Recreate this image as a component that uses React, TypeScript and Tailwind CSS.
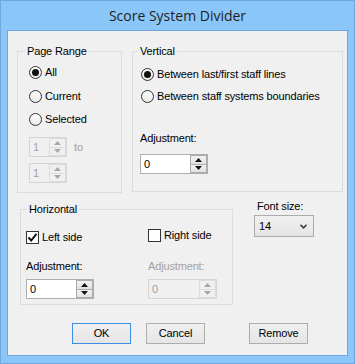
import React from "react";

function Radio({ checked, label, className }: { checked?: boolean; label: string; className: string }) {
  return (
    <div className={`flex items-center ${className}`}>
      <span className="w-[13px] h-[13px] rounded-full border border-[#333333] bg-gradient-to-b from-[#ffffff] to-[#e9e9e9] flex items-center justify-center shrink-0">
        {checked ? <span className="w-[7px] h-[7px] rounded-full bg-[#111111]" /> : null}
      </span>
      <span className="ml-[3px] leading-[13px]">{label}</span>
    </div>
  );
}

function Check({ checked, label, className }: { checked?: boolean; label: string; className: string }) {
  return (
    <div className={`flex items-center ${className}`}>
      <span className="w-[13px] h-[13px] border border-[#333333] bg-white flex items-center justify-center shrink-0">
        {checked ? (
          <svg width="11" height="11" viewBox="0 0 11 11">
            <path d="M1.5 5.5 L4.2 8.5 L9.5 1.8" fill="none" stroke="#111" strokeWidth="2" />
          </svg>
        ) : null}
      </span>
      <span className="ml-[3px] leading-[13px]">{label}</span>
    </div>
  );
}

function Arrow({ up, color }: { up?: boolean; color: string }) {
  return (
    <svg width="7" height="4" viewBox="0 0 7 4">
      {up ? <polygon points="0,4 7,4 3.5,0" fill={color} /> : <polygon points="0,0 7,0 3.5,4" fill={color} />}
    </svg>
  );
}

function Spin({ value, disabled, className }: { value: string; disabled?: boolean; className: string }) {
  return (
    <div
      className={`flex h-[20px] border ${
        disabled ? "border-[#d5d5d5] bg-[#f0f0f0] text-[#a0a0a0]" : "border-[#abadb3] bg-white text-black"
      } ${className}`}
    >
      <div className="flex-1 flex items-center pl-[3px] leading-[13px]">{value}</div>
      <div className="w-[17px] flex flex-col">
        <div
          className={`flex-1 flex items-center justify-center border ${
            disabled ? "border-[#dcdcdc] bg-[#f0f0f0]" : "border-[#acacac] bg-gradient-to-b from-[#f2f2f2] to-[#e2e2e2]"
          }`}
        >
          <Arrow up color={disabled ? "#a8a8a8" : "#111"} />
        </div>
        <div
          className={`flex-1 flex items-center justify-center border-x border-b ${
            disabled ? "border-[#dcdcdc] bg-[#f0f0f0]" : "border-[#acacac] bg-gradient-to-b from-[#f2f2f2] to-[#e2e2e2]"
          }`}
        >
          <Arrow color={disabled ? "#a8a8a8" : "#111"} />
        </div>
      </div>
    </div>
  );
}

function Btn({ label, def, className }: { label: string; def?: boolean; className: string }) {
  return (
    <div
      className={`w-[59px] h-[21px] flex items-center justify-center border bg-gradient-to-b from-[#f0f0f0] to-[#e5e5e5] leading-[13px] ${
        def ? "border-[#3d8fe3]" : "border-[#adadad]"
      } ${className}`}
    >
      {label}
    </div>
  );
}

export default function App() {
  return (
    <div className="w-[355px] h-[364px] bg-[#8ac6f8] border border-[#72a8de] flex flex-col font-['Liberation_Sans',Arial,sans-serif] text-[11px] tracking-[-0.15px] text-black">
      <div className="h-[29px] flex items-center justify-center font-['Open_Sans',sans-serif] text-[14px] tracking-normal text-[#1f1f1f]">
        Score System Divider
      </div>
      <div className="mx-[6px] h-[326px] border border-[#6fa5dc] bg-[#f0f0f0] flex flex-col">
        {/* Row 1 */}
        <div className="flex mt-[14px]">
          <fieldset className="ml-[9px] w-[105px] h-[148px] border border-[#dcdcdc]">
            <legend className="ml-[7px] px-[2px] leading-[13px]">Page Range</legend>
            <div className="pl-[11px] pt-[2px] flex flex-col">
              <Radio checked label="All" className="h-[24px]" />
              <Radio label="Current" className="h-[24px]" />
              <Radio label="Selected" className="h-[22px]" />
              <div className="flex items-center mt-[7px]">
                <Spin value="1" disabled className="w-[38px]" />
                <span className="ml-[7px] text-[#a0a0a0] leading-[13px]">to</span>
              </div>
              <Spin value="1" disabled className="w-[38px] mt-[6px]" />
            </div>
          </fieldset>
          <fieldset className="ml-[10px] w-[211px] h-[147px] border border-[#dcdcdc]">
            <legend className="ml-[5px] px-[2px] leading-[13px]">Vertical</legend>
            <div className="pl-[7px] pt-[5px] flex flex-col">
              <Radio checked label="Between last/first staff lines" className="h-[22px] ml-[1px]" />
              <Radio label="Between staff systems boundaries" className="h-[22px] ml-[1px]" />
              <div className="mt-[25px] leading-[13px]">Adjustment:</div>
              <Spin value="0" className="w-[68px] mt-[9px]" />
            </div>
          </fieldset>
        </div>
        {/* Row 2 */}
        <div className="flex items-start mt-[6px]">
          <fieldset className="mt-[4px] ml-[12px] w-[213px] h-[102px] border border-[#dcdcdc]">
            <legend className="ml-[6px] px-[2px] leading-[13px]">Horizontal</legend>
            <div className="flex pl-[5px]">
              <div className="w-[122px] flex flex-col">
                <Check checked label="Left side" className="h-[16px] mt-[13px]" />
                <div className="mt-[15px] leading-[13px]">Adjustment:</div>
                <Spin value="0" className="w-[68px] mt-[6px]" />
              </div>
              <div className="flex flex-col">
                <Check label="Right side" className="h-[16px] mt-[11px]" />
                <div className="mt-[17px] leading-[13px] text-[#a0a0a0]">Adjustment:</div>
                <Spin value="0" disabled className="w-[69px] mt-[6px]" />
              </div>
            </div>
          </fieldset>
          <div className="ml-[21px] flex flex-col">
            <div className="mt-[1px] pl-[3px] leading-[13px]">Font size:</div>
            <div className="mt-[2px] w-[60px] h-[22px] border border-[#acacac] bg-gradient-to-b from-[#f0f0f0] to-[#e5e5e5] flex items-center pl-[4px] pr-[6px]">
              <span className="flex-1 leading-[13px]">14</span>
              <svg width="7" height="5" viewBox="0 0 7 5">
                <path d="M0.5 0.8 L3.5 3.8 L6.5 0.8" fill="none" stroke="#444" strokeWidth="1.6" />
              </svg>
            </div>
          </div>
        </div>
        {/* Buttons */}
        <div className="flex mt-[18px]">
          <Btn def label="OK" className="ml-[64px]" />
          <Btn label="Cancel" className="ml-[15px]" />
          <Btn label="Remove" className="ml-[44px]" />
        </div>
      </div>
    </div>
  );
}
